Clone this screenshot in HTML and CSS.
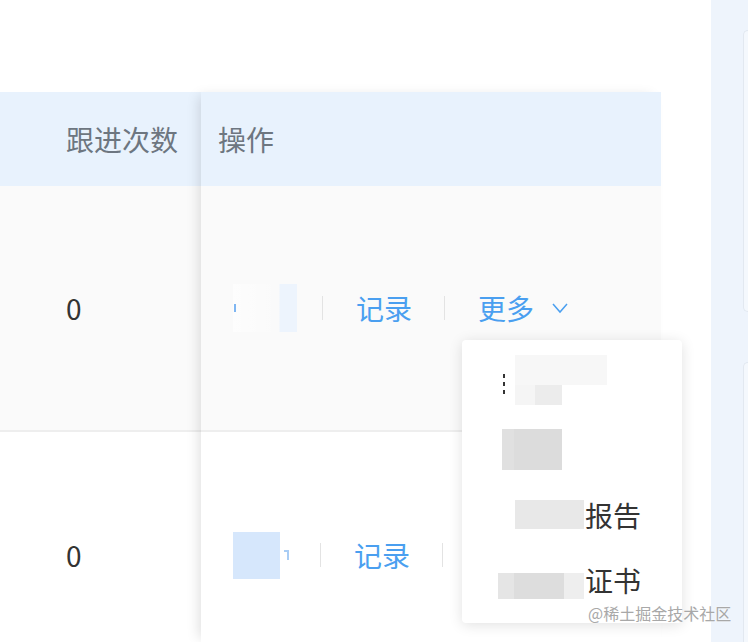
FILE: index.html
```html
<!DOCTYPE html>
<html lang="zh-CN">
<head>
<meta charset="utf-8">
<link rel="stylesheet" href="styles.css">
</head>
<body>
<div class="page">
  <div class="main">
    <div class="table">
      <div class="col-left">
        <div class="th">跟进次数</div>
        <div class="td r1">0</div>
        <div class="td r2">0</div>
      </div>
      <div class="col-fixed">
        <div class="th th-ops">操作</div>
        <div class="td r1 ops">
          <span class="blur1"><i class="tick"></i></span>
          <span class="sep sep-a"></span>
          <span class="link">记录</span>
          <span class="sep"></span>
          <span class="link">更多</span>
          <svg class="chev" width="16" height="12" viewBox="0 0 16 12"><polyline points="1,2 8,10 15,2" fill="none" stroke="#4a9ff0" stroke-width="1.5"/></svg>
        </div>
        <div class="td r2 ops">
          <span class="blur2"></span><i class="frag"></i>
          <span class="sep sep-b"></span>
          <span class="link">记录</span>
          <span class="sep"></span>
        </div>
      </div>
    </div>
  </div>
  <div class="side">
    <div class="card c1"></div>
    <div class="card c2"></div>
  </div>
</div>
<div class="dropdown">
  <div class="item item1"><i class="dots"></i><span class="m1"><span class="m1a"></span><span class="m1b"></span></span></div>
  <div class="item item2"><span class="m2"></span></div>
  <div class="item item3"><span class="m3"></span><span class="txt">报告</span></div>
  <div class="item item4"><span class="m4"></span><span class="txt">证书</span></div>
</div>
<div class="watermark">@稀土掘金技术社区</div>
</body>
</html>
```
FILE: styles.css
```css
html, body {
  margin: 0;
  padding: 0;
}
body {
  width: 748px;
  height: 642px;
  overflow: hidden;
  background: #ffffff;
  font-family: "Noto Sans CJK SC", "Noto Sans", sans-serif;
  position: relative;
}
.page {
  display: flex;
  height: 642px;
  overflow: hidden;
}
.main {
  width: 711px;
  flex: none;
  padding-top: 92px;
  box-sizing: border-box;
}
.table {
  display: flex;
  width: 661px;
}
.col-left {
  width: 201px;
  flex: none;
}
.col-fixed {
  width: 460px;
  flex: none;
  position: relative;
  z-index: 1;
  box-shadow: -6px 0 12px -4px rgba(0, 0, 0, 0.13);
}
.th {
  height: 94px;
  background: #e8f2fd;
  color: #6d7680;
  font-size: 28px;
  display: flex;
  align-items: center;
  padding-left: 66px;
}
.th-ops {
  padding-left: 17px;
}
.td {
  display: flex;
  align-items: center;
  padding-left: 66px;
  font-size: 28px;
  color: #333333;
  box-sizing: border-box;
}
.r1 {
  height: 246px;
  background: #fafafa;
  border-bottom: 2px solid #eeeeee;
}
.r2 {
  height: 210px;
  padding-top: 36px;
  background: #ffffff;
}
.ops {
  padding-left: 32px;
}
.link {
  color: #4a9ff0;
  font-size: 28px;
  width: 56px;
  flex: none;
  white-space: nowrap;
}
.sep {
  width: 1px;
  height: 24px;
  background: #e3e3e3;
  margin: 0 33px 0 32px;
  flex: none;
}
.sep-a {
  margin-left: 25px;
}
.sep-b {
  margin-left: 31px;
}
.blur1 {
  width: 64px;
  height: 48px;
  flex: none;
  display: flex;
  align-items: center;
  background: linear-gradient(to right, rgba(255,255,255,0.6) 0, rgba(250,250,250,0) 46px, #edf4fd 47px, #edf4fd 64px);
}
.tick {
  width: 2px;
  height: 8px;
  margin-left: 1px;
  background: #7fb6f2;
}
.blur2 {
  width: 47px;
  height: 47px;
  flex: none;
  background: #d6e7fc;
}
.frag {
  width: 5px;
  height: 10px;
  margin-left: 4px;
  border-top: 2px solid #a9cdf5;
  border-right: 2px solid #a9cdf5;
  box-sizing: border-box;
  flex: none;
}
.chev {
  margin-left: 18px;
  flex: none;
}
.side {
  flex: 1;
  background: #eef4fc;
  padding-top: 30px;
  box-sizing: border-box;
  display: flex;
  flex-direction: column;
  gap: 50px;
}
.card {
  margin-left: 32px;
  border: 1px solid #e2e8f0;
  border-right: none;
  border-radius: 10px 0 0 10px;
  background: #f4f8fd;
}
.c1 {
  height: 280px;
}
.c2 {
  flex: 1;
  border-bottom: none;
  border-radius: 10px 0 0 0;
}
.dropdown {
  position: absolute;
  left: 462px;
  top: 340px;
  width: 220px;
  height: 283px;
  background: #ffffff;
  border-radius: 4px;
  box-shadow: 0 2px 14px rgba(0, 0, 0, 0.12);
  padding-top: 12px;
  box-sizing: border-box;
  z-index: 5;
}
.item {
  height: 65px;
  display: flex;
  align-items: center;
  font-size: 28px;
  color: #333333;
}
.item1 {
  padding-left: 41px;
  align-items: flex-start;
}
.dots {
  width: 2px;
  height: 20px;
  margin-top: 22px;
  background: repeating-linear-gradient(to bottom, #333 0, #333 4px, transparent 4px, transparent 8px);
  flex: none;
}
.m1 {
  margin-left: 10px;
  margin-top: 3px;
  display: flex;
  flex-direction: column;
}
.m1a {
  width: 92px;
  height: 30px;
  background: #f7f7f7;
}
.m1b {
  width: 47px;
  height: 20px;
  background: linear-gradient(to right, #f5f5f5 0, #f5f5f5 20px, #ececec 20px);
}
.item2 {
  padding-left: 40px;
}
.m2 {
  width: 60px;
  height: 41px;
  background: linear-gradient(to right, #e0e0e0 0, #e0e0e0 12px, #dcdcdc 12px);
}
.item3 {
  padding-left: 53px;
}
.m3 {
  width: 69px;
  height: 29px;
  background: #e8e8e8;
  flex: none;
}
.txt {
  margin-left: 1px;
  white-space: nowrap;
}
.item4 {
  padding-left: 36px;
}
.m4 {
  width: 86px;
  height: 26px;
  margin-top: 12px;
  background: linear-gradient(to right, #e5e5e5 0, #e5e5e5 16px, #dddddd 16px, #dddddd 66px, #eeeeee 66px);
  flex: none;
}
.watermark {
  position: absolute;
  left: 588px;
  top: 601px;
  font-size: 16px;
  color: #a8a8a8;
  white-space: nowrap;
  text-shadow: 0 0 2px #ffffff;
  z-index: 6;
}
```
